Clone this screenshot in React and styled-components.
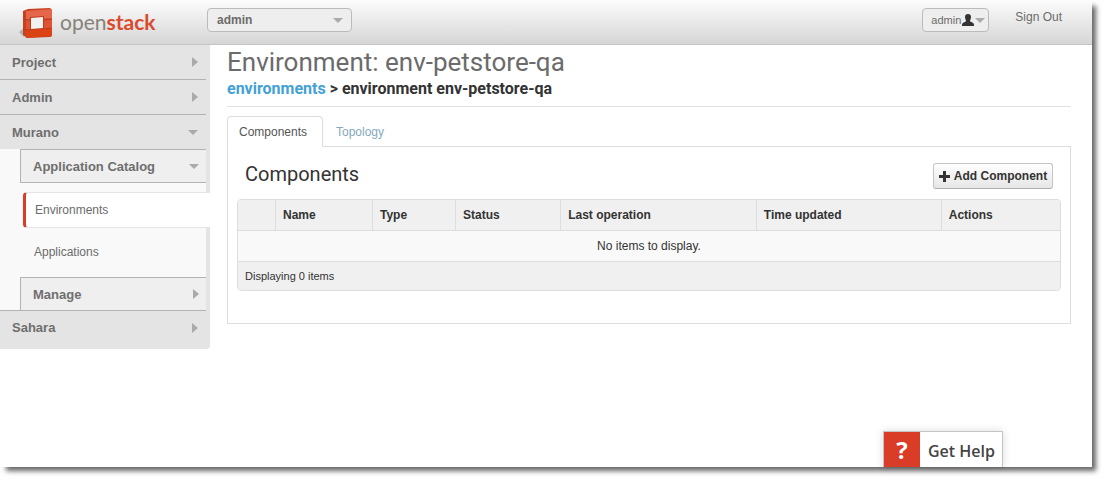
import React from "react";
import styled, { createGlobalStyle, css } from "styled-components";

const sans = '"Liberation Sans", Arial, sans-serif';
const display = 'Roboto, "Open Sans", sans-serif';

const GlobalStyle = createGlobalStyle`
  * { box-sizing: border-box; }
  html, body, #root { height: 100%; }
  body {
    margin: 0;
    background: #fff;
    color: #333;
    font-family: ${sans};
    font-size: 12px;
    line-height: 18px;
    overflow: hidden;
  }
  h1, h2, p, ul { margin: 0; padding: 0; }
  ul { list-style: none; }
  button { font-family: inherit; cursor: pointer; }
`;

const Frame = styled.div`
  height: 100%;
  padding: 0 15px 15px 0;
`;

const Page = styled.div`
  display: flex;
  flex-direction: column;
  height: 100%;
  background: #fff;
  box-shadow: 5px 5px 5px -1px rgba(0, 0, 0, 0.6);
`;

const TopBar = styled.header`
  display: flex;
  align-items: flex-start;
  height: 45px;
  flex: none;
  padding: 8px 30px 0 19px;
  background: linear-gradient(#fcfcfc, #d6d6d6);
  border-bottom: 1px solid #c4c4c4;
`;

const Brand = styled.a`
  display: flex;
  width: 188px;
  color: #87837a;
  font: 21px/28px Lato, "Open Sans", sans-serif;
  text-decoration: none;
  b { color: #db4a2b; }
`;

const BrandMark = styled.svg`
  flex: none;
  width: 34px;
  height: 32px;
  margin-right: 7px;
`;

const pill = css`
  display: flex;
  align-items: center;
  height: 24px;
  border: 1px solid #bbb;
  border-radius: 4px;
  background: #eee;
  color: #6b6b6b;
`;

const ProjectButton = styled.button`
  ${pill}
  justify-content: space-between;
  width: 145px;
  padding: 0 8px 0 9px;
  font-size: 12px;
  font-weight: bold;
`;

const Account = styled.div`
  display: flex;
  gap: 26px;
  margin-left: auto;
`;

const UserButton = styled.button`
  ${pill}
  width: 67px;
  gap: 1px;
  padding: 0 2px 0 8px;
  font-size: 11px;
  svg { flex: none; }
`;

const SignOut = styled.a`
  color: #6b6b6b;
  text-decoration: none;
`;

const Caret = styled.span`
  flex: none;
  border: solid transparent;
  ${({ $right }) =>
    $right
      ? "border-width: 5px 0 5px 6px; border-left-color: #aaa;"
      : "border-width: 5px 5px 0; border-top-color: #aaa;"}
`;

const Body = styled.div`
  display: flex;
  align-items: flex-start;
`;

const Sidebar = styled.nav`
  flex: none;
  width: 210px;
  padding-right: 4px;
  background: #e4e4e4;
  border-radius: 0 0 4px 0;
`;

const menuRow = css`
  display: flex;
  align-items: center;
  justify-content: space-between;
  width: 100%;
  border: 0;
  color: #6e6e6e;
  font-size: 13px;
  font-weight: bold;
  text-align: left;
`;

const Group = styled.button`
  ${menuRow}
  height: 34px;
  padding: 0 8px 0 12px;
  background: #e4e4e4;
  & + & {
    height: 35px;
    border-top: 1px solid #b3b3b3;
  }
`;

const LastGroup = styled(Group)`
  height: 39px;
  padding-bottom: 5px;
  border-top: 1px solid #b3b3b3;
`;

const SubMenu = styled.div`
  padding-left: 20px;
  background: #f9f9f9;
`;

const SubGroup = styled.button`
  ${menuRow}
  height: ${({ $open }) => ($open ? 34 : 33)}px;
  padding: 0 7px 0 12px;
  background: #efefef;
  border: solid #b3b3b3;
  border-width: ${({ $open }) => ($open ? "1px 0 1px 1px" : "1px 0 0 1px")};
`;

const Panels = styled.ul`
  display: flex;
  flex-direction: column;
  gap: 6px;
  padding: 9px 0 7px 3px;
`;

const PanelLink = styled.a`
  display: flex;
  align-items: center;
  height: 36px;
  padding-left: 11px;
  color: #6b6b6b;
  text-decoration: none;
  ${({ $active }) =>
    $active &&
    css`
      margin-right: -4px;
      padding-left: 9px;
      background: #fff;
      border: solid #e4e4e4;
      border-width: 1px 0;
      border-left: 3px solid #d93c27;
      border-radius: 4px 0 0 4px;
    `}
`;

const Main = styled.main`
  flex: 1;
  min-width: 0;
  padding: 0 21px 0 17px;
`;

const PageHeader = styled.div`
  padding-bottom: 7px;
  border-bottom: 1px solid #e2e2e2;
`;

const Title = styled.h1`
  color: #6b6b6b;
  font: 26px/34px ${display};
`;

const Crumbs = styled.p`
  color: #333;
  font: bold 16px/20px ${display};
  a { color: #43a1d6; text-decoration: none; }
`;

const Tabs = styled.div`
  display: flex;
  margin-top: 9px;
`;

const Tab = styled.button`
  min-width: 96px;
  height: 31px;
  margin-bottom: -1px;
  padding: 0 12px;
  border: 1px solid transparent;
  border-radius: 4px 4px 0 0;
  background: transparent;
  color: #86a9bd;
  font-size: 12px;
  text-align: left;
  ${({ $active }) =>
    $active &&
    css`
      padding: 0 11px;
      background: #fff;
      border-color: #ddd;
      border-bottom-color: #fff;
      color: #555;
    `}
`;

const Panel = styled.section`
  padding: 16px 9px 32px;
  border: 1px solid #ddd;
`;

const PanelHead = styled.div`
  display: flex;
  justify-content: space-between;
  padding: 0 8px 10px;
`;

const PanelTitle = styled.h2`
  color: #333;
  font: 20px/22px ${display};
`;

const AddButton = styled.button`
  display: flex;
  align-items: center;
  justify-content: center;
  gap: 4px;
  width: 120px;
  height: 26px;
  padding: 0;
  border: 1px solid #c4c4c4;
  border-bottom-color: #b0b0b0;
  border-radius: 3px;
  background: linear-gradient(#fff, #e6e6e6);
  color: #333;
  font-size: 12px;
  font-weight: bold;
  svg { flex: none; }
`;

const Table = styled.table`
  width: 100%;
  table-layout: fixed;
  border: 1px solid #ddd;
  border-radius: 4px;
  border-spacing: 0;
  overflow: hidden;
  th {
    height: 30px;
    padding: 0 7px;
    background: #f0f0f0;
    text-align: left;
  }
  th + th { border-left: 1px solid #ddd; }
  td {
    height: 31px;
    padding: 0 7px;
    border-top: 1px solid #ddd;
    background: #f9f9f9;
    text-align: center;
  }
  tfoot td {
    height: 29px;
    background: #f0f0f0;
    font-size: 11px;
    text-align: left;
  }
`;

const Col = styled.col`
  width: ${({ $w }) => $w};
`;

const Help = styled.a`
  display: flex;
  flex: none;
  width: 120px;
  height: 36px;
  margin: auto 89px 0 auto;
  border: 1px solid #c4c4c4;
  border-bottom: 0;
  background: #fff;
  box-shadow: 0 0 8px rgba(0, 0, 0, 0.15);
  color: #444;
  font: 600 16px/38px "Open Sans", sans-serif;
  text-decoration: none;
`;

const HelpMark = styled.span`
  width: 36px;
  margin-right: 8px;
  background: #d93c27;
  color: #fff;
  font-size: 24px;
  line-height: 36px;
  font-weight: 700;
  text-align: center;
`;

const columns = [
  ["", "4.5%"],
  ["Name", "11.8%"],
  ["Type", "10.1%"],
  ["Status", "12.8%"],
  ["Last operation", "23.8%"],
  ["Time updated", "22.5%"],
  ["Actions", "14.5%"],
];

function OpenStackMark() {
  return (
    <BrandMark viewBox="0 0 34 32" aria-hidden="true">
      <path d="M0 24 5 20V29Z" fill="#999" opacity="0.7" />
      <path d="M4 3 9 1 31 0 33 2V28L31 29 8 30 4 27Z" fill="#c8401f" />
      <path d="M7 3 33 1V10L7 11Z" fill="#e5674b" />
      <path d="M7 11 33 10V21H7Z" fill="#e05234" />
      <path d="M7 21H33V28L7 30Z" fill="#dc4314" />
      <path d="M11 9 25 8V21L11 22Z" fill="#c03a1c" />
      <path d="M12 10 24 9V20L12 21Z" fill="#f1f1f1" />
      <path d="M4 11 7 12 11 12M25 12 33 11M4 20 7 22 11 22M25 21 33 20" fill="none" stroke="#b83a1d" />
    </BrandMark>
  );
}

export default function App() {
  return (
    <Frame>
      <GlobalStyle />
      <Page>
        <TopBar>
          <Brand href="#">
            <OpenStackMark />
            <span>open<b>stack</b></span>
          </Brand>
          <ProjectButton>admin<Caret /></ProjectButton>
          <Account>
            <UserButton aria-label="admin account">
              admin
              <svg width="12" height="12" viewBox="0 0 12 12" fill="#333" aria-hidden="true">
                <path d="M3 3C3 1 4 0 6 0s3 1 3 3-1 3-1 4 4 1 4 4v1H0v-1c0-3 4-3 4-4S3 5 3 3Z" />
              </svg>
              <Caret />
            </UserButton>
            <SignOut href="#">Sign Out</SignOut>
          </Account>
        </TopBar>
        <Body>
          <Sidebar>
            <Group>Project<Caret $right /></Group>
            <Group>Admin<Caret $right /></Group>
            <Group>Murano<Caret /></Group>
            <SubMenu>
              <SubGroup $open>Application Catalog<Caret /></SubGroup>
              <Panels>
                <li><PanelLink href="#" $active>Environments</PanelLink></li>
                <li><PanelLink href="#">Applications</PanelLink></li>
              </Panels>
              <SubGroup>Manage<Caret $right /></SubGroup>
            </SubMenu>
            <LastGroup>Sahara<Caret $right /></LastGroup>
          </Sidebar>
          <Main>
            <PageHeader>
              <Title>Environment: env-petstore-qa</Title>
              <Crumbs><a href="#">environments</a> &gt; environment env-petstore-qa</Crumbs>
            </PageHeader>
            <Tabs role="tablist">
              <Tab role="tab" aria-selected="true" $active>Components</Tab>
              <Tab role="tab" aria-selected="false">Topology</Tab>
            </Tabs>
            <Panel>
              <PanelHead>
                <PanelTitle>Components</PanelTitle>
                <AddButton>
                  <svg width="11" height="11" viewBox="0 0 11 11" fill="#333" aria-hidden="true">
                    <path d="M4 0h3v4h4v3H7v4H4V7H0V4h4Z" />
                  </svg>
                  Add Component
                </AddButton>
              </PanelHead>
              <Table>
                <colgroup>{columns.map(([name, w]) => <Col key={name} $w={w} />)}</colgroup>
                <thead>
                  <tr>{columns.map(([name]) => <th key={name} scope="col">{name}</th>)}</tr>
                </thead>
                <tbody><tr><td colSpan={7}>No items to display.</td></tr></tbody>
                <tfoot><tr><td colSpan={7}>Displaying 0 items</td></tr></tfoot>
              </Table>
            </Panel>
          </Main>
        </Body>
        <Help href="#"><HelpMark>?</HelpMark>Get Help</Help>
      </Page>
    </Frame>
  );
}
